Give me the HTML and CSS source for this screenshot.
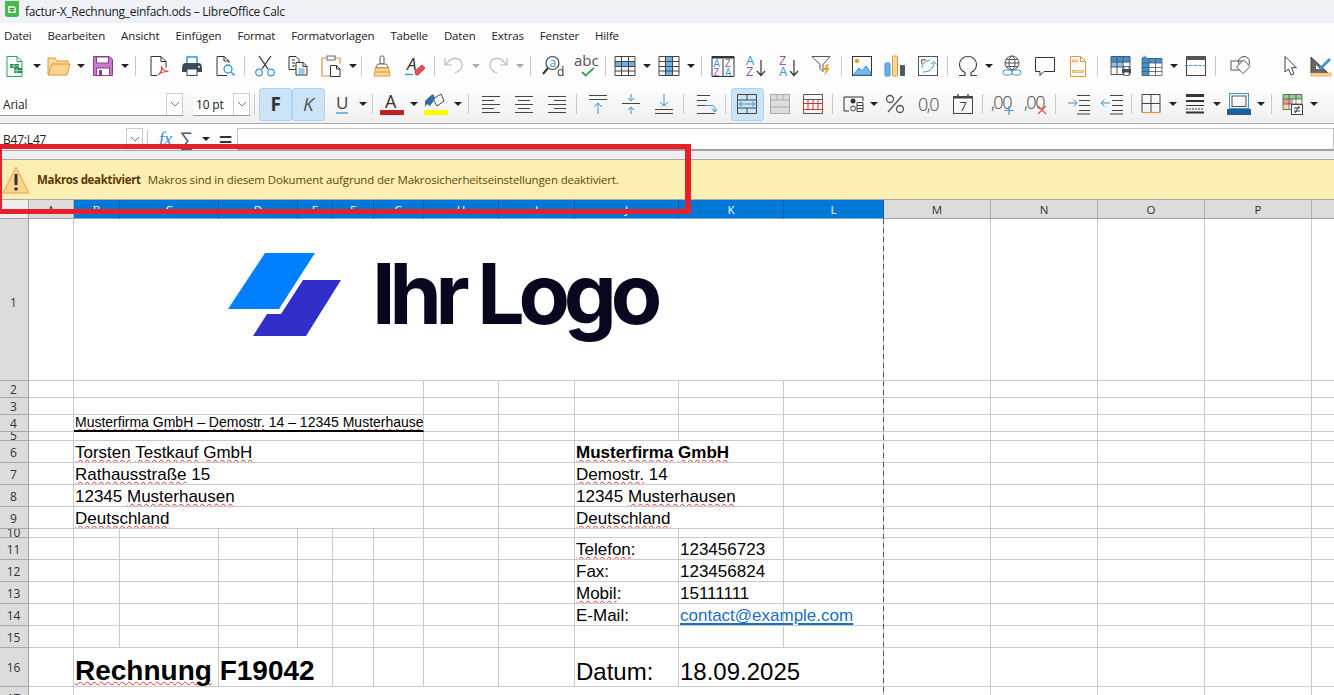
FILE: index.html

```html
<!DOCTYPE html>
<html lang="de">
<head>
  <meta charset="UTF-8">
  <title>factur-X_Rechnung_einfach.ods – LibreOffice Calc</title>
  <link rel="stylesheet" href="styles.css">
</head>
<body>
  <div class="titlebar">
    <svg class="appicon" width="16" height="18" viewBox="0 0 16 18"><rect x="1" y="-3" width="14" height="19" rx="3" fill="#46b84c"/><path d="M4 5h6l2 2v5H4z" fill="#d9f2d6"/><path d="M5.500 7.500h5M5.500 9.500h5M8 6.500v5" stroke="#2e8f3a"/></svg>
    <span>factur-X_Rechnung_einfach.ods – LibreOffice Calc</span>
  </div>

  <div class="menubar">
    <span>Datei</span><span>Bearbeiten</span><span>Ansicht</span><span>Einfügen</span><span>Format</span><span>Formatvorlagen</span><span>Tabelle</span><span>Daten</span><span>Extras</span><span>Fenster</span><span>Hilfe</span>
  </div>

  <div class="toolbars">
    <div class="toolbar first">
      <div class="b"><svg class="i" viewBox="0 0 22 22"><path d="M3 1.500h10l5 5v15H3zM13 1.500v5h5" stroke="#2e9e62"/><path d="M6 9h9v4h3v5H10v-5H6z" fill="#1f8a4c" stroke="none"/><path d="M6 11h9M10 9v9M13 13v5M10 15.500h8" stroke="#d8f0e0" stroke-width=".7"/></svg></div><div class="c"></div>
      <div class="b"><svg class="w24" viewBox="0 0 24 22"><path d="M1 19V3h7l2 3h11v4" fill="#fbd894" stroke="#e2963c"/><path d="M5 9h18l-3 11H1z" fill="#fcd48e" stroke="#e2963c"/></svg></div><div class="c"></div>
      <div class="b"><svg class="i" viewBox="0 0 22 22"><path d="M1.500 1.500h16l3 3v16h-19z" fill="#cc7bcc" stroke="#8e3c90"/><rect x="4.500" y="2" width="12" height="6" fill="#fff" stroke="#8e3c90"/><rect x="4.500" y="13" width="13" height="7.500" fill="#fff" stroke="#8e3c90"/><rect x="7" y="15" width="3" height="5" fill="#8e3c90" stroke="none"/></svg></div><div class="c"></div>
      <div class="s m6"></div>
      <div class="b"><svg class="i" viewBox="0 0 22 22"><path d="M3 20.500V1.500h10l5 5v6M13 1.500v5h5M3 20.500h6" stroke="#333"/><path d="M10 20c3-2 4-6 3.500-9 0 3 3 5 7 5.500-4 0-8 1-10.500 3.500z" stroke="#e04a3c" stroke-width="1.200"/></svg></div>
      <div class="b"><svg class="i" viewBox="0 0 22 22"><path d="M6 8V2h10v6" stroke="#3a94d8" stroke-width="1.500"/><path d="M1 14c0-4 1-6 3-6h14c2 0 3 2 3 6v3H1z" fill="#3f4b57" stroke="none"/><rect x="6" y="14" width="10" height="6.500" fill="#fff" stroke="#3f4b57"/><rect x="17" y="11" width="2" height="1.500" fill="#fff" stroke="none"/></svg></div>
      <div class="b"><svg class="i" viewBox="0 0 22 22"><path d="M15 8V6l-5-4.500H3v19h10M10 1.500V6h5" stroke="#333"/><circle cx="14" cy="14" r="4" stroke="#3a94d8" stroke-width="1.300"/><path d="M17 17l3.500 3.500" stroke="#3a94d8" stroke-width="1.500"/></svg></div>
      <div class="s"></div>
      <div class="b"><svg class="i" viewBox="0 0 22 22"><path d="M5 1l9 13M17 1L8 14" stroke="#333" stroke-width="1.300"/><circle cx="5" cy="17.500" r="3.300" stroke="#3a94d8" stroke-width="1.200"/><circle cx="17" cy="17.500" r="3.300" stroke="#3a94d8" stroke-width="1.200"/></svg></div>
      <div class="b"><svg class="i" viewBox="0 0 22 22"><path d="M9 14.500H2v-13h7l3 3v3M5 5h3M5 8h3M5 11h3" stroke="#333"/><path d="M9 7.500h7l4 4v8.500H9zM16 7.500v4h4" fill="#fff" stroke="#333"/><path d="M11.500 14h6M11.500 16h6M11.500 18h6" stroke="#3a94d8"/></svg></div>
      <div class="b"><svg class="i" viewBox="0 0 22 22"><path d="M7 3H2v18h8M15 3h5v6" stroke="#e2963c" stroke-width="1.200"/><rect x="7" y="1" width="8" height="4" fill="#fff" stroke="#666"/><path d="M10.500 10.500h6l3.500 3.500v7.500h-9.500zM16.500 10.500v3.500h3.500" fill="#fff" stroke="#333"/></svg></div><div class="c"></div>
      <div class="s m3 k"></div>
      <div class="b"><svg class="i" viewBox="0 0 22 22"><rect x="9" y="1" width="4" height="8" rx="1.500" fill="#fff" stroke="#555"/><path d="M5 13c0-2 1-4 3-4h6c2 0 3 2 3 4z" fill="#fff" stroke="#555"/><path d="M4.500 13h13l1.500 8H3z" fill="#fbd894" stroke="#e2963c"/><path d="M4 17h14" stroke="#e2963c"/></svg></div>
      <div class="b"><svg class="i" viewBox="0 0 22 22"><text x="3" y="15" class="ia">A</text><path d="M1 19.500h8" stroke="#3a94d8" stroke-width="1.300"/><path d="M11 16l7-6 3 3-7 7h-2z" fill="#e8505a" stroke="#d03a44"/></svg></div>
      <div class="s m3"></div>
      <div class="b"><svg class="i" viewBox="0 0 22 22"><path d="M2 3v7h7M2 10l5-5c4-3 11-2 12 4 .6 4-3 8-7 9" stroke="#bbb" stroke-width="1.200"/></svg></div><div class="c off"></div>
      <div class="b"><svg class="i" viewBox="0 0 22 22"><path d="M20 3v7h-7M20 10l-5-5C11 2 4 3 3 9c-.6 4 3 8 7 9" stroke="#bbb" stroke-width="1.200"/></svg></div><div class="c off"></div>
      <div class="s m5"></div>
      <div class="b"><svg class="i" viewBox="0 0 22 22"><circle cx="10.500" cy="8" r="6.500" stroke="#444" stroke-width="1.200"/><path d="M6 13l-5 6" stroke="#333" stroke-width="2"/><text x="7.500" y="11.500" class="il" fill="#3a94d8">a</text><text x="15" y="21" class="il" fill="#333">d</text></svg></div>
      <div class="b"><svg class="i wide" viewBox="0 0 24 22"><text x="0" y="11" class="iabc">abc</text><path d="M8 17l3.500 3.500L20 13" stroke="#3aa655" stroke-width="1.800"/></svg></div>
      <div class="s m3"></div>
      <div class="b"><svg class="i" viewBox="0 0 22 22"><rect x="1" y="6.500" width="20" height="5" fill="#6fb1e4" stroke="none"/><path d="M1 1.500h20v19H1zM1 6.500h20M1 11.500h20M1 16h20M7.500 1.500v19M14.500 1.500v19" stroke="#444"/></svg></div><div class="c"></div>
      <div class="b"><svg class="i" viewBox="0 0 22 22"><rect x="7.500" y="1.500" width="7" height="19" fill="#6fb1e4" stroke="none"/><path d="M1 1.500h20v19H1zM1 6.500h20M1 11.500h20M1 16h20M7.500 1.500v19M14.500 1.500v19" stroke="#444"/></svg></div><div class="c"></div>
      <div class="s"></div>
      <div class="b"><svg class="w24" viewBox="0 0 24 22"><path d="M1 1.500h22v20H1z" stroke="#333"/><path d="M1 2.500h22" stroke="#333" stroke-width="2"/><path d="M12 4v17" stroke="#333"/><text x="2.500" y="12" class="is" fill="#3a94d8">A</text><text x="2.500" y="20.500" class="is" fill="#a04fb0">Z</text><text x="14" y="12" class="is" fill="#a04fb0">Z</text><text x="14" y="20.500" class="is" fill="#3a94d8">A</text></svg></div>
      <div class="b"><svg class="i" viewBox="0 0 22 22"><text x="1" y="10" class="im" fill="#3a94d8">A</text><text x="1" y="21" class="im" fill="#a04fb0">Z</text><path d="M16 5v15M12 16l4 4.500 4-4.500" stroke="#333" stroke-width="1.200"/></svg></div>
      <div class="b"><svg class="i" viewBox="0 0 22 22"><text x="1" y="10" class="im" fill="#a04fb0">Z</text><text x="1" y="21" class="im" fill="#3a94d8">A</text><path d="M16 5v15M12 16l4 4.500 4-4.500" stroke="#333" stroke-width="1.200"/></svg></div>
      <div class="b"><svg class="i" viewBox="0 0 22 22"><path d="M1 1.500h18l-7 8v7l-3-3v-4z" stroke="#555"/><path d="M16 9l-4 6h3l-2 6 6-8h-3l2-4z" fill="#f0a030" stroke="none"/></svg></div>
      <div class="s"></div>
      <div class="b"><svg class="i" viewBox="0 0 22 22"><rect x="1.500" y="1.500" width="19" height="19" stroke="#333"/><circle cx="6" cy="6" r="2.300" fill="#f0a030" stroke="none"/><path d="M2 20l6-7 3 3 4-5 5 7v2z" fill="#7ab8ea" stroke="#3a94d8"/></svg></div>
      <div class="b"><svg class="i" viewBox="0 0 22 22"><rect x="1" y="8" width="5" height="13" rx="1" fill="#6fb1e4" stroke="#3a94d8"/><rect x="8.500" y="1" width="5" height="20" rx="1" fill="#fbd894" stroke="#e2963c"/><rect x="16" y="10" width="5" height="11" rx="1" fill="#555" stroke="none"/></svg></div>
      <div class="b"><svg class="i" viewBox="0 0 22 22"><rect x="1.500" y="1.500" width="19" height="19" stroke="#555"/><path d="M4 4h5v1.500H4zM4 4h1.500v5H4z" fill="#888" stroke="none"/><path d="M6 17c6 0 10-3 11-9M14 9l3-2.500 2.500 3M5 13c0-4 3-7 8-8" stroke="#3a94d8"/></svg></div>
      <div class="s m3"></div>
      <div class="b"><svg class="i" viewBox="0 0 22 22"><path d="M2 20.500h6v-3C4 15.500 2.500 12.500 2.500 9.500 2.500 5 6 1.500 11 1.500s8.500 3.500 8.500 8c0 3-1.500 6-5.500 8v3h6" stroke="#444" stroke-width="1.200"/></svg></div><div class="c"></div>
      <div class="b"><svg class="i" viewBox="0 0 22 22"><circle cx="11" cy="8" r="7" stroke="#555"/><ellipse cx="11" cy="8" rx="3" ry="7" stroke="#555"/><path d="M4 8h14M5 4.500h12M5 11.500h12" stroke="#555"/><rect x="2" y="15" width="9" height="5" rx="2.500" fill="#fff" stroke="#3a94d8"/><rect x="11" y="15" width="9" height="5" rx="2.500" fill="#fff" stroke="#3a94d8"/></svg></div>
      <div class="b"><svg class="i" viewBox="0 0 22 22"><path d="M1.500 2.500h19v14H10l-4 4v-4H1.500z" stroke="#333"/></svg></div>
      <div class="b"><svg class="i" viewBox="0 0 22 22"><path d="M3.500 1.500h10l5 5v15h-15zM13.500 1.500v5h5" stroke="#e2963c"/><rect x="5.500" y="5" width="5" height="2" fill="#fbd894" stroke="#e2963c" stroke-width=".6"/><rect x="5.500" y="15.500" width="11" height="2" fill="#fbd894" stroke="#e2963c" stroke-width=".6"/></svg></div>
      <div class="s m7"></div>
      <div class="b"><svg class="i" viewBox="0 0 22 22"><rect x="1" y="1" width="19" height="6" fill="#3a94d8" stroke="none"/><rect x="1" y="7" width="12" height="5" fill="#8cc4ee" stroke="none"/><path d="M1 1.500h19v18H1zM1 7h19M1 12h19M7 1.500v18M13 1.500v18" stroke="#555"/><path d="M12 14h9v4h-9z" fill="#3f4b57" stroke="none"/><rect x="14" y="11.500" width="5" height="3" fill="#fff" stroke="#3f4b57" stroke-width=".8"/><rect x="14" y="17" width="5" height="3.500" fill="#fff" stroke="#3f4b57" stroke-width=".8"/></svg></div>
      <div class="b back"><svg class="i" viewBox="0 0 22 22"><rect x="1" y="3" width="7" height="18" fill="#3a94d8" stroke="none"/><rect x="7" y="3" width="14" height="5" fill="#3a94d8" stroke="none"/><path d="M1 3.500h20v17H1zM1 8h20M1 12.500h20M1 16.500h20M8 3.500v17M14.500 3.500v17" stroke="#555" stroke-width=".8"/><path d="M3 .5l1 5M1 2.500l5 1M6 1.500L1 5" stroke="#2e86cc"/></svg></div><div class="c"></div>
      <div class="b"><svg class="i" viewBox="0 0 22 22"><rect x="1.500" y="1.500" width="19" height="19" stroke="#444"/><rect x="1" y="1" width="20" height="4" fill="#555" stroke="none"/><path d="M0 10.500h22" stroke="#3a94d8" stroke-dasharray="3 1.500"/></svg></div>
      <div class="s m8"></div>
      <div class="b"><svg class="i" viewBox="0 0 22 22"><rect x="1" y="6" width="11" height="9" stroke="#555"/><circle cx="14" cy="7" r="5.500" stroke="#555"/><path d="M13.500 5l6.500 6.500-7 7-6.500-6.500z" fill="#fff" stroke="#555"/></svg></div>
      <div class="b spacer"></div>
      <div class="b"><svg class="i" viewBox="0 0 22 22"><path d="M5 1.500v15.500l3.500-3 2.500 6 3-1.300-2.500-6h5z" stroke="#444"/></svg></div>
      <div class="b tight"><svg class="i" viewBox="0 0 22 22"><path d="M1 18V2l17 16z" fill="#666" stroke="#444"/><path d="M6 14V10l4 4z" fill="#fff" stroke="none"/><rect x="1" y="18" width="20" height="3" fill="#fbd894" stroke="#e2963c" stroke-width=".7"/><path d="M10 12l9-9 2 2-9 9-3 1z" fill="#3a94d8" stroke="none"/></svg></div>
    </div>

    <div class="toolbar second">
      <div class="combo font"><span>Arial</span><i><svg width="10" height="6" viewBox="0 0 10 6"><path d="M1 1l4 4 4-4" fill="none" stroke="#777"/></svg></i></div>
      <div class="combo size"><span>10 pt</span><i><svg width="10" height="6" viewBox="0 0 10 6"><path d="M1 1l4 4 4-4" fill="none" stroke="#777"/></svg></i></div>
      <div class="s nar"></div>
      <div class="b on"><svg class="i" viewBox="0 0 22 22"><text x="5.500" y="18" class="bold">F</text></svg></div>
      <div class="b on"><svg class="i" viewBox="0 0 22 22"><text x="5" y="18" class="ital">K</text></svg></div>
      <div class="b"><svg class="i" viewBox="0 0 22 22"><text x="5" y="16" class="und">U</text><path d="M5 20h12" stroke="#3a94d8" stroke-width="1.300"/></svg></div><div class="c"></div>
      <div class="s m3 k"></div>
      <div class="b"><svg class="w24" viewBox="0 0 24 22"><text x="5" y="15" class="capa">A</text><rect x="0" y="17" width="24" height="5" fill="#c1201f" stroke="none"/></svg></div><div class="c"></div>
      <div class="b"><svg class="w24" viewBox="0 0 24 22"><path d="M9 6l8-5 3 7-7 5z" fill="#fff" stroke="#444"/><path d="M8 1.500L1 8v6l2-3 3 2 5-7-1-4z" fill="#2f6ea8" stroke="none"/><rect x="0" y="17" width="24" height="5" fill="#ffff00" stroke="none"/></svg></div><div class="c"></div>
      <div class="s m5"></div>
      <div class="b"><svg class="i" viewBox="0 0 22 22"><path d="M2 3.500h18M2 7.500h12M2 11.500h18M2 15.500h12M2 19.500h18" stroke="#444"/></svg></div>
      <div class="b"><svg class="i" viewBox="0 0 22 22"><path d="M2 3.500h18M5 7.500h12M2 11.500h18M5 15.500h12M2 19.500h18" stroke="#444"/></svg></div>
      <div class="b"><svg class="i" viewBox="0 0 22 22"><path d="M2 3.500h18M8 7.500h12M2 11.500h18M8 15.500h12M2 19.500h18" stroke="#444"/></svg></div>
      <div class="s m5"></div>
      <div class="b"><svg class="i" viewBox="0 0 22 22"><path d="M2 2.500h18M2 6.500h18" stroke="#444"/><path d="M11 21V10M7 14l4-4 4 4" stroke="#3a94d8"/></svg></div>
      <div class="b"><svg class="i" viewBox="0 0 22 22"><path d="M2 10.500h18" stroke="#444"/><path d="M11 1v7M8 5l3 3 3-3M11 21v-7M8 17l3-3 3 3" stroke="#3a94d8"/></svg></div>
      <div class="b"><svg class="i" viewBox="0 0 22 22"><path d="M2 16.500h18M2 20.500h18" stroke="#444"/><path d="M11 1v12M7 9l4 4 4-4" stroke="#3a94d8"/></svg></div>
      <div class="s m5"></div>
      <div class="b"><svg class="i" viewBox="0 0 22 22"><path d="M2 2.500h13M2 7.500h10M2 12.500h9M2 20.500h18" stroke="#444"/><path d="M10 12.500h7c3 0 3 3 3 6M17 15.500l3 3.500 2-3" stroke="#3a94d8"/></svg></div>
      <div class="s m5"></div>
      <div class="b on"><svg class="i" viewBox="0 0 22 22"><path d="M1.500 1.500h19v19h-19zM1.500 7h19M1.500 15h19M11 1.500V7M11 15v5.500" stroke="#444"/><path d="M3 11h16M6 8.500L3 11l3 2.500M16 8.500l3 2.500-3 2.500" stroke="#3a94d8"/></svg></div>
      <div class="b"><svg class="i" viewBox="0 0 22 22"><rect x="1.500" y="1.500" width="19" height="19" fill="#ddd" stroke="#aaa"/><path d="M1.500 7h19M1.500 14h19M8 1.500V7M14 1.500V7" stroke="#aaa"/></svg></div>
      <div class="b"><svg class="i" viewBox="0 0 22 22"><path d="M1.500 1.500h19v19h-19zM1.500 6.500h19" stroke="#555"/><path d="M1.500 10.500h19M1.500 16.500h19M6 6.500v10M11 6.500v10M16 6.500v10" stroke="#c23a30"/><path d="M1.500 6.500v14M20.500 6.500v14" stroke="#c23a30"/></svg></div>
      <div class="s m3"></div>
      <div class="b"><svg class="i" viewBox="0 0 22 22"><path d="M7 18H2V4h19v4" stroke="#333"/><circle cx="11" cy="8" r="2.500" fill="#333" stroke="none"/><circle cx="11" cy="15.500" r="2.500" stroke="#444"/><path d="M15 9.500h6M15 12.500h6M15 15.500h6M15 18.500h6M15 9.500v9M21 9.500v9" stroke="#444"/></svg></div><div class="c"></div>
      <div class="b back1"><svg class="i" viewBox="0 0 22 22"><path d="M18 3L4 19" stroke="#555" stroke-width="1.300"/><circle cx="6" cy="6" r="3.500" stroke="#555" stroke-width="1.300"/><circle cx="16" cy="16" r="3.500" stroke="#555" stroke-width="1.300"/></svg></div>
      <div class="b fwd1"><svg class="w24" viewBox="0 0 24 22"><text x="0" y="18" class="num">0,0</text></svg></div>
      <div class="b"><svg class="i" viewBox="0 0 22 22"><rect x="1.500" y="3.500" width="19" height="17" stroke="#444"/><rect x="1" y="3" width="20" height="2.500" fill="#444" stroke="none"/><path d="M6 1v3M16 1v3" stroke="#444" stroke-width="1.500"/><text x="7.500" y="18" class="im" fill="#444">7</text></svg></div>
      <div class="s"></div>
      <div class="b"><svg class="w24" viewBox="0 0 24 22"><text x="0" y="16" class="num">,00</text><path d="M18 13v9M13.500 17.500h9" stroke="#3a94d8" stroke-width="1.200"/></svg></div>
      <div class="b"><svg class="w24" viewBox="0 0 24 22"><text x="0" y="16" class="num">,00</text><path d="M14 13l8 8M22 13l-8 8" stroke="#e8505a" stroke-width="1.200"/></svg></div>
      <div class="s m6"></div>
      <div class="b"><svg class="w24" viewBox="0 0 24 22"><path d="M10 2.500h13M12 7.500h11M12 12.500h11M12 17.500h11M10 21h13" stroke="#444"/><path d="M1 10h9M6.500 6.500l3.500 3.500-3.500 3.500" stroke="#3a94d8"/></svg></div>
      <div class="b"><svg class="w24" viewBox="0 0 24 22"><path d="M10 2.500h13M12 7.500h11M12 12.500h11M12 17.500h11M10 21h13" stroke="#444"/><path d="M10 10H1M4.500 6.500L1 10l3.500 3.500" stroke="#3a94d8"/></svg></div>
      <div class="s m3"></div>
      <div class="b"><svg class="i" viewBox="0 0 22 22"><path d="M2 19.500V1.500h18v18M11 1.500v18M2 10.500h18" stroke="#444"/><path d="M2 19.500h18" stroke="#e2963c" stroke-width="1.200"/></svg></div><div class="c"></div>
      <div class="b"><svg class="i" viewBox="0 0 22 22"><rect x="2" y="1" width="18" height="3" fill="#333" stroke="none"/><path d="M2 8h18" stroke="#333" stroke-width="2"/><path d="M2 12.500h18" stroke="#333"/><path d="M2 16h18" stroke="#333" stroke-dasharray="2 1"/><path d="M2 19.500h18" stroke="#333" stroke-width="2"/></svg></div><div class="c"></div>
      <div class="b"><svg class="w24" viewBox="0 0 24 22"><rect x="2.500" y="0.500" width="19" height="15" stroke="#3a94d8"/><rect x="5" y="3" width="14" height="10.500" stroke="#555"/><rect x="0" y="16" width="24" height="6" fill="#215f9a" stroke="none"/></svg></div><div class="c"></div>
      <div class="s"></div>
      <div class="b"><svg class="i" viewBox="0 0 22 22"><rect x="1" y="1" width="19" height="5" fill="#8fd08f" stroke="none"/><rect x="1" y="6" width="10" height="5" fill="#f09a90" stroke="none"/><rect x="1" y="11" width="6" height="5" fill="#fbd894" stroke="none"/><path d="M1 1.500h19v15H1zM1 6h19M1 11h19M7 1.500v15M14 1.500v15" stroke="#555" stroke-width=".8"/><rect x="9.500" y="11.500" width="11" height="10" fill="#fff" stroke="#444"/><path d="M12 15h6M12 18h6M17 13l-4 7" stroke="#333"/></svg></div><div class="c"></div>
    </div>
  </div>

  <div class="formulabar">
    <div class="combo name"><span>B47:L47</span><i><svg width="10" height="6" viewBox="0 0 10 6"><path d="M1 1l4 4 4-4" fill="none" stroke="#777"/></svg></i></div>
    <div class="fsep"></div>
    <span class="fx">fx</span>
    <span class="sum">∑</span>
    <div class="c"></div>
    <span class="eq">=</span>
    <div class="finput"></div>
  </div>
  <div class="strip"></div>

  <div class="infobar">
    <svg width="28" height="28" viewBox="0 0 28 28"><path d="M14 1L1 27h26z" fill="#fcd58a" stroke="#e8a060"/><path d="M14 8v11" stroke="#333" stroke-width="3"/><circle cx="14" cy="23" r="1.800" fill="#333"/></svg>
    <strong>Makros deaktiviert</strong>
    <span>Makros sind in diesem Dokument aufgrund der Makrosicherheitseinstellungen deaktiviert.</span>
  </div>

  <div class="sheet">
    <table>
      <colgroup>
        <col class="c-rh"><col class="c-a"><col class="c-b"><col class="c-c"><col class="c-d"><col class="c-e"><col class="c-f"><col class="c-g"><col class="c-h"><col class="c-i"><col class="c-j"><col class="c-k"><col class="c-l"><col class="c-m"><col class="c-m"><col class="c-m"><col class="c-m"><col class="c-m">
      </colgroup>
      <tr class="head r0"><th class="corner"></th><th>A</th><th class="sel">B</th><th class="sel">C</th><th class="sel">D</th><th class="sel">E</th><th class="sel">F</th><th class="sel">G</th><th class="sel">H</th><th class="sel">I</th><th class="sel">J</th><th class="sel">K</th><th class="sel">L</th><th>M</th><th>N</th><th>O</th><th>P</th><th>Q</th></tr>
      <tr class="r1"><td class="rh">1</td><td></td>
        <td colspan="11" class="logocell">
          <div class="logo">
            <svg width="114" height="84" viewBox="0 0 114 84"><polygon points="37,1 87,1 51,57 0,57" fill="#0080ff"/><polygon points="75,28 113,28 78,84 25,84 39,62 53,62" fill="#312ec9"/></svg>
            <span>Ihr Logo</span>
          </div>
        </td>
        <td></td><td></td><td></td><td></td><td></td></tr>
      <tr class="r17"><td class="rh">2</td><td></td><td colspan="6"></td><td></td><td></td><td></td><td></td><td></td><td></td><td></td><td></td><td></td><td></td></tr>
      <tr class="r17"><td class="rh">3</td><td></td><td colspan="6"></td><td></td><td></td><td></td><td></td><td></td><td></td><td></td><td></td><td></td><td></td></tr>
      <tr class="r17"><td class="rh">4</td><td></td><td colspan="6" class="sender"><u>Musterfirma</u> <u>GmbH</u> – <u>Demostr.</u> 14 – 12345 <u>Musterhausen</u></td><td></td><td></td><td></td><td></td><td></td><td></td><td></td><td></td><td></td><td></td></tr>
      <tr class="r9"><td class="rh">5</td><td></td><td colspan="6"></td><td></td><td></td><td></td><td></td><td></td><td></td><td></td><td></td><td></td><td></td></tr>
      <tr class="r22"><td class="rh">6</td><td></td><td colspan="6"><u>Torsten</u> <u>Testkauf</u> <u>GmbH</u></td><td></td><td></td><td colspan="2"><b><u>Musterfirma</u> <u>GmbH</u></b></td><td></td><td></td><td></td><td></td><td></td><td></td></tr>
      <tr class="r22"><td class="rh">7</td><td></td><td colspan="6"><u>Rathausstraße</u> 15</td><td></td><td></td><td colspan="2"><u>Demostr.</u> 14</td><td></td><td></td><td></td><td></td><td></td><td></td></tr>
      <tr class="r22"><td class="rh">8</td><td></td><td colspan="6">12345 <u>Musterhausen</u></td><td></td><td></td><td colspan="2">12345 <u>Musterhausen</u></td><td></td><td></td><td></td><td></td><td></td><td></td></tr>
      <tr class="r22"><td class="rh">9</td><td></td><td colspan="6"><u>Deutschland</u></td><td></td><td></td><td colspan="2"><u>Deutschland</u></td><td></td><td></td><td></td><td></td><td></td><td></td></tr>
      <tr class="r9"><td class="rh">10</td><td></td><td></td><td></td><td></td><td></td><td></td><td></td><td></td><td></td><td></td><td></td><td></td><td></td><td></td><td></td><td></td><td></td></tr>
      <tr class="r22"><td class="rh">11</td><td></td><td></td><td></td><td></td><td></td><td></td><td></td><td></td><td></td><td><u>Telefon</u>:</td><td>123456723</td><td></td><td></td><td></td><td></td><td></td><td></td></tr>
      <tr class="r22"><td class="rh">12</td><td></td><td></td><td></td><td></td><td></td><td></td><td></td><td></td><td></td><td>Fax:</td><td>123456824</td><td></td><td></td><td></td><td></td><td></td><td></td></tr>
      <tr class="r22"><td class="rh">13</td><td></td><td></td><td></td><td></td><td></td><td></td><td></td><td></td><td></td><td><u>Mobil</u>:</td><td>15111111</td><td></td><td></td><td></td><td></td><td></td><td></td></tr>
      <tr class="r22"><td class="rh">14</td><td></td><td></td><td></td><td></td><td></td><td></td><td></td><td></td><td></td><td>E-Mail:</td><td class="over"><a href="#">contact@example.com</a></td><td></td><td></td><td></td><td></td><td></td><td></td></tr>
      <tr class="r22"><td class="rh">15</td><td></td><td></td><td></td><td></td><td></td><td></td><td></td><td></td><td></td><td></td><td></td><td></td><td></td><td></td><td></td><td></td><td></td></tr>
      <tr class="r39"><td class="rh">16</td><td></td><td colspan="2" class="over inv"><u>Rechnung</u> F19042</td><td colspan="2"></td><td></td><td></td><td></td><td></td><td class="big">Datum:</td><td colspan="2" class="big">18.09.2025</td><td></td><td></td><td></td><td></td><td></td></tr>
      <tr class="r22"><td class="rh">17</td><td></td><td colspan="11"></td><td></td><td></td><td></td><td></td><td></td></tr>
    </table>
    <div class="pagebreak"></div>
  </div>

  <div class="annotation"></div>
</body>
</html>
```

FILE: styles.css

```css
html, body {
  margin: 0;
  height: 100%;
  overflow: hidden;
}
body {
  display: flex;
  flex-direction: column;
  font-family: 'Open Sans', sans-serif;
  color: #222;
  background: #fff;
  position: relative;
}

.titlebar {
  height: 23px;
  flex: none;
  display: flex;
  align-items: center;
  gap: 5px;
  padding-left: 4px;
  background: #eef1f6;
  font-size: 12px;
  letter-spacing: -.3px;
  color: #1c1c1c;
}
.appicon { margin-top: -4px; }

.menubar {
  height: 24px;
  flex: none;
  display: flex;
  align-items: center;
  gap: 16px;
  padding-left: 4px;
  background: #fdfdfd;
  font-size: 11.5px;
  letter-spacing: -.14px;
  color: #222;
}

.toolbars {
  flex: none;
  background: linear-gradient(#fdfdfd 55%, #efefef);
  border-bottom: 1px solid #aaa;
}
.toolbar {
  height: 38px;
  display: flex;
  align-items: center;
}
.first { margin-left: -1.5px; }
.b {
  width: 33px;
  height: 33px;
  flex: none;
  box-sizing: border-box;
  display: flex;
  align-items: center;
  justify-content: center;
}
.b.on {
  background: #cce4f7;
  border: 1px solid #a9d3f2;
  border-radius: 3px;
}
.b.spacer { width: 17px; }
.b.tight { margin-left: -3px; }
.b.back { margin-left: -2px; }
.b.back1 { margin-left: -2px; }
.b.fwd1 { margin-left: 2px; }
.c {
  width: 11px;
  flex: none;
  height: 10px;
  position: relative;
}
.c::after {
  content: "";
  position: absolute;
  left: 1px;
  top: 3px;
  border-left: 4px solid transparent;
  border-right: 4px solid transparent;
  border-top: 4px solid #222;
}
.c.off::after { border-top-color: #aaa; }
.s {
  width: 1px;
  height: 20px;
  flex: none;
  margin: 0 4px 0 2.5px;
  background: #c8c8c8;
}
.c + .s { margin-left: 4.5px; }
.c + .s.k { margin-left: 2.5px; }
.s.m3 { margin-right: 3px; }
.s.m5 { margin-right: 5px; }
.s.m6 { margin-right: 6px; }
.s.m7 { margin-right: 7px; }
.s.m8 { margin-right: 8px; }
.s.nar { margin: 0 4px; }

.i { width: 22px; height: 22px; fill: none; stroke: #3b3b3b; overflow: visible; }
.i.wide, .w24 { width: 24px; height: 22px; fill: none; stroke: #3b3b3b; overflow: visible; }

svg text { stroke: none; font-family: 'Open Sans', sans-serif; }
.ia { font-size: 17px; font-style: italic; fill: #333; }
.il { font-size: 12px; }
.iabc { font-size: 15px; fill: #555; }
.is { font-size: 10px; }
.im { font-size: 13px; }
.bold { font-size: 19px; font-weight: 700; fill: #333; }
.ital { font-size: 19px; font-style: italic; fill: #555; }
.und { font-size: 17px; fill: #444; }
.capa { font-size: 18px; fill: #333; }
.num { font-size: 18px; font-weight: 300; fill: #444; letter-spacing: -1.500px; }

.combo {
  height: 23px;
  flex: none;
  box-sizing: border-box;
  display: flex;
  align-items: center;
  background: #fff;
  border-bottom: 1px solid #999;
  font-family: 'Open Sans', sans-serif;
  font-size: 12px;
  color: #222;
}
.combo span {
  flex: 1;
  padding: 1px 0 0 3px;
  letter-spacing: -.2px;
}
.combo i {
  width: 17px;
  height: 100%;
  box-sizing: border-box;
  border: 1px solid #ccc;
  border-bottom: 0;
  display: flex;
  align-items: center;
  justify-content: center;
}
.font { width: 183px; margin-right: 10px; }
.size { width: 57px; }

.formulabar {
  height: 26px;
  flex: none;
  display: flex;
  align-items: center;
  background: #fdfdfd;
  box-sizing: border-box;
  padding-top: 4px;
}
.name { width: 143px; }
.fsep { width: 1px; height: 18px; margin: 0 11px 0 4px; background: #c8c8c8; }
.fx {
  width: 21px;
  font: italic 18px 'Liberation Serif', serif;
  color: #2f8fce;
}
.sum { width: 21px; font-size: 19px; color: #555; }
.eq { width: 19px; margin: 0 2px 0 4px; text-align: center; font-size: 24px; line-height: 22px; font-weight: 600; color: #333; }
.finput {
  flex: 1;
  height: 22px;
  background: #fff;
  border: 1px solid #c4c4c4;
  border-bottom-color: #999;
  box-sizing: border-box;
}

.strip {
  height: 10px;
  flex: none;
  box-sizing: border-box;
  background: #efefef;
  border-top: 1px solid #a8a8a8;
  border-bottom: 1px solid #a8a8a8;
}

.infobar {
  height: 40px;
  flex: none;
  box-sizing: border-box;
  display: flex;
  align-items: center;
  padding: 0 0 0 2px;
  background: #fdeeb3;
  border-bottom: 1px solid #a8a8a8;
  color: #66450c;
  font-size: 11.500px;
}
.infobar svg { margin-top: 1px; }
.infobar strong { margin: 0 7px 0 7px; letter-spacing: -.33px; color: #5a3a05; }
.infobar span { letter-spacing: -.15px; }

.sheet {
  flex: 1;
  min-height: 0;
  overflow: hidden;
  position: relative;
}
table {
  border-collapse: separate;
  border-spacing: 0;
  table-layout: fixed;
  width: 1419px;
  font-family: 'Liberation Sans', Arial, sans-serif;
  font-size: 17px;
  color: #000;
}
.c-rh { width: 29px; }
.c-a { width: 45px; }
.c-b { width: 46px; }
.c-c { width: 99px; }
.c-d { width: 79px; }
.c-e { width: 35px; }
.c-f { width: 41px; }
.c-g { width: 50px; }
.c-h { width: 75px; }
.c-i { width: 76px; }
.c-j { width: 104px; }
.c-k { width: 105px; }
.c-l { width: 100px; }
.c-m { width: 107px; }

td, th {
  box-sizing: border-box;
  padding: 0 0 0 1px;
  border-right: 1px solid #cacaca;
  border-bottom: 1px solid #cacaca;
  overflow: hidden;
  white-space: nowrap;
}
th {
  font: 400 11.500px 'Open Sans', sans-serif;
  padding: 0;
  background: #dcdcdc;
  color: #333;
  border-right-color: #b0b0b0;
  border-bottom-color: #a0a0a0;
}
th.corner { background: #eee; border-right-color: #a0a0a0; }
th.sel {
  background: #0078d7;
  color: #fff;
  border-right-color: #0d5ca8;
  border-bottom-color: #7ba9d0;
}
.r1 { height: 162px; }
.r0 { height: 19px; }
.r17 { height: 17px; }
.r22 { height: 22px; }
.r39 { height: 39px; }
.r9 { height: 9px; }
.r9 td { line-height: 8px; }
.r17 td { line-height: 15px; }
.r22 td { line-height: 18px; padding-top: 3px; }
td.rh {
  padding: 0 1px 0 0;
  text-align: center;
  background: #dcdcdc;
  border-right-color: #a0a0a0;
  border-bottom-color: #a8a8a8;
  font: 400 12px 'Open Sans', sans-serif;
  color: #333;
}
.r1 td.rh { padding-top: 6px; }
.r22 td.rh { line-height: 18px; padding-top: 3px; }
.r9 td.rh { line-height: 8px; }
.r17 td.rh { line-height: 15px; }

u {
  text-decoration: underline wavy #e0312e 1.300px;
  text-decoration-skip-ink: none;
  text-underline-offset: 1px;
}
.r17 td.sender {
  font-size: 14px;
  line-height: 15px;
  border-bottom: 2px solid #000;
  vertical-align: bottom;
}
.over { overflow: visible; }
.inv {
  font-size: 28px;
  font-weight: 700;
  vertical-align: bottom;
  line-height: 31px;
}
.big {
  font-size: 24px;
  vertical-align: bottom;
  line-height: 28px;
}
a {
  color: #1b6ec2;
  text-decoration: underline 2px;
  text-underline-offset: 2px;
}

.logocell { vertical-align: top; padding: 0; overflow: hidden; }
.logo {
  display: flex;
  align-items: flex-start;
  gap: 30px;
  padding: 33px 0 0 154px;
}
.logo span {
  font: 700 84px/100px Inter, sans-serif;
  letter-spacing: -6.200px;
  color: #07071f;
  margin-top: -8px;
}

.pagebreak {
  position: absolute;
  left: 883px;
  top: 19px;
  bottom: 0;
  width: 1px;
  background: repeating-linear-gradient(#555 0 5px, transparent 5px 9px);
}
.annotation {
  position: absolute;
  left: -3px;
  top: 144px;
  width: 694px;
  height: 70px;
  box-sizing: border-box;
  border: 5px solid #e8202c;
  border-right-width: 6px;
}
```
